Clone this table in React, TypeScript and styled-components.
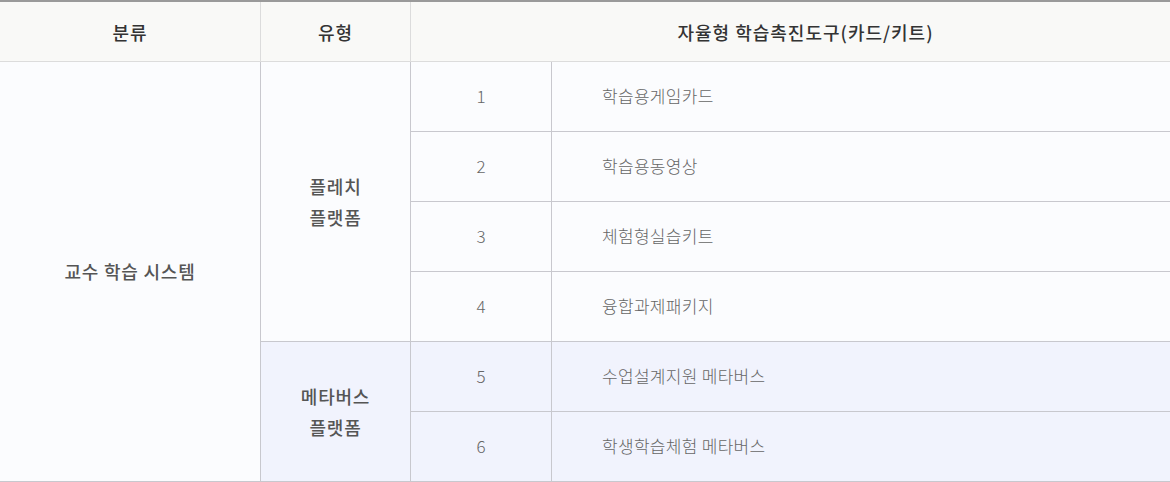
import { createGlobalStyle } from "styled-components"
import styled from "styled-components"

const GlobalStyle = createGlobalStyle`
  html, body {
    margin: 0;
    padding: 0;
    background: #ffffff;
  }
  body {
    font-family: "Noto Sans CJK KR", "Noto Sans", sans-serif;
  }
`

const Table = styled.table`
  width: 1170px;
  table-layout: fixed;
  border-collapse: separate;
  border-spacing: 0;
  border-top: 2px solid #9a9a9a;
`

const HeadRow = styled.tr`
  height: 60px;
`

const BodyRow = styled.tr`
  height: 70px;
`

const HeadCell = styled.th<{ last?: boolean }>`
  padding: ${(p) => (p.last ? "0 0 0 30px" : "0")};
  background: #f9f9f7;
  border-bottom: 1px solid #dcdcdc;
  border-right: ${(p) => (p.last ? "none" : "1px solid #dcdcdc")};
  font-size: 18px;
  font-weight: 500;
  letter-spacing: 1px;
  color: #333;
  text-align: center;
  vertical-align: middle;
`

const GroupCell = styled.td<{ meta?: boolean }>`
  padding: 0;
  background: ${(p) => (p.meta ? "#f1f3fd" : "#fbfcfe")};
  border-bottom: 1px solid #c8c8ce;
  border-right: 1px solid #c8c8ce;
  font-size: 18px;
  font-weight: 500;
  letter-spacing: 0.8px;
  line-height: 31px;
  color: #555;
  text-align: center;
  vertical-align: middle;
`

const NumCell = styled.td<{ meta?: boolean }>`
  padding: 0 0 3px;
  background: ${(p) => (p.meta ? "#f1f3fd" : "#fbfcfe")};
  border-bottom: 1px solid #c8c8ce;
  border-right: 1px solid #c8c8ce;
  font-size: 17px;
  font-weight: 300;
  color: #666;
  text-align: center;
  vertical-align: middle;
`

const NameCell = styled.td<{ meta?: boolean }>`
  padding: 0 0 3px 50px;
  background: ${(p) => (p.meta ? "#f1f3fd" : "#fbfcfe")};
  border-bottom: 1px solid #c8c8ce;
  font-size: 17px;
  font-weight: 300;
  letter-spacing: 0.3px;
  color: #666;
  text-align: left;
  vertical-align: middle;
`

const tools = [
  { no: 1, name: "학습용게임카드" },
  { no: 2, name: "학습용동영상" },
  { no: 3, name: "체험형실습키트" },
  { no: 4, name: "융합과제패키지" },
  { no: 5, name: "수업설계지원 메타버스" },
  { no: 6, name: "학생학습체험 메타버스" },
]

export default function App() {
  return (
    <>
      <GlobalStyle />
      <Table>
        <colgroup>
          <col style={{ width: 261 }} />
          <col style={{ width: 150 }} />
          <col style={{ width: 141 }} />
          <col />
        </colgroup>
        <thead>
          <HeadRow>
            <HeadCell>분류</HeadCell>
            <HeadCell>유형</HeadCell>
            <HeadCell colSpan={2} last>
              자율형 학습촉진도구(카드/키트)
            </HeadCell>
          </HeadRow>
        </thead>
        <tbody>
          {tools.map((t, i) => {
            const meta = t.no > 4
            return (
              <BodyRow key={t.no}>
                {i === 0 && <GroupCell rowSpan={6}>교수 학습 시스템</GroupCell>}
                {i === 0 && (
                  <GroupCell rowSpan={4}>
                    플레치
                    <br />
                    플랫폼
                  </GroupCell>
                )}
                {i === 4 && (
                  <GroupCell rowSpan={2} meta>
                    메타버스
                    <br />
                    플랫폼
                  </GroupCell>
                )}
                <NumCell meta={meta}>{t.no}</NumCell>
                <NameCell meta={meta}>{t.name}</NameCell>
              </BodyRow>
            )
          })}
        </tbody>
      </Table>
    </>
  )
}
